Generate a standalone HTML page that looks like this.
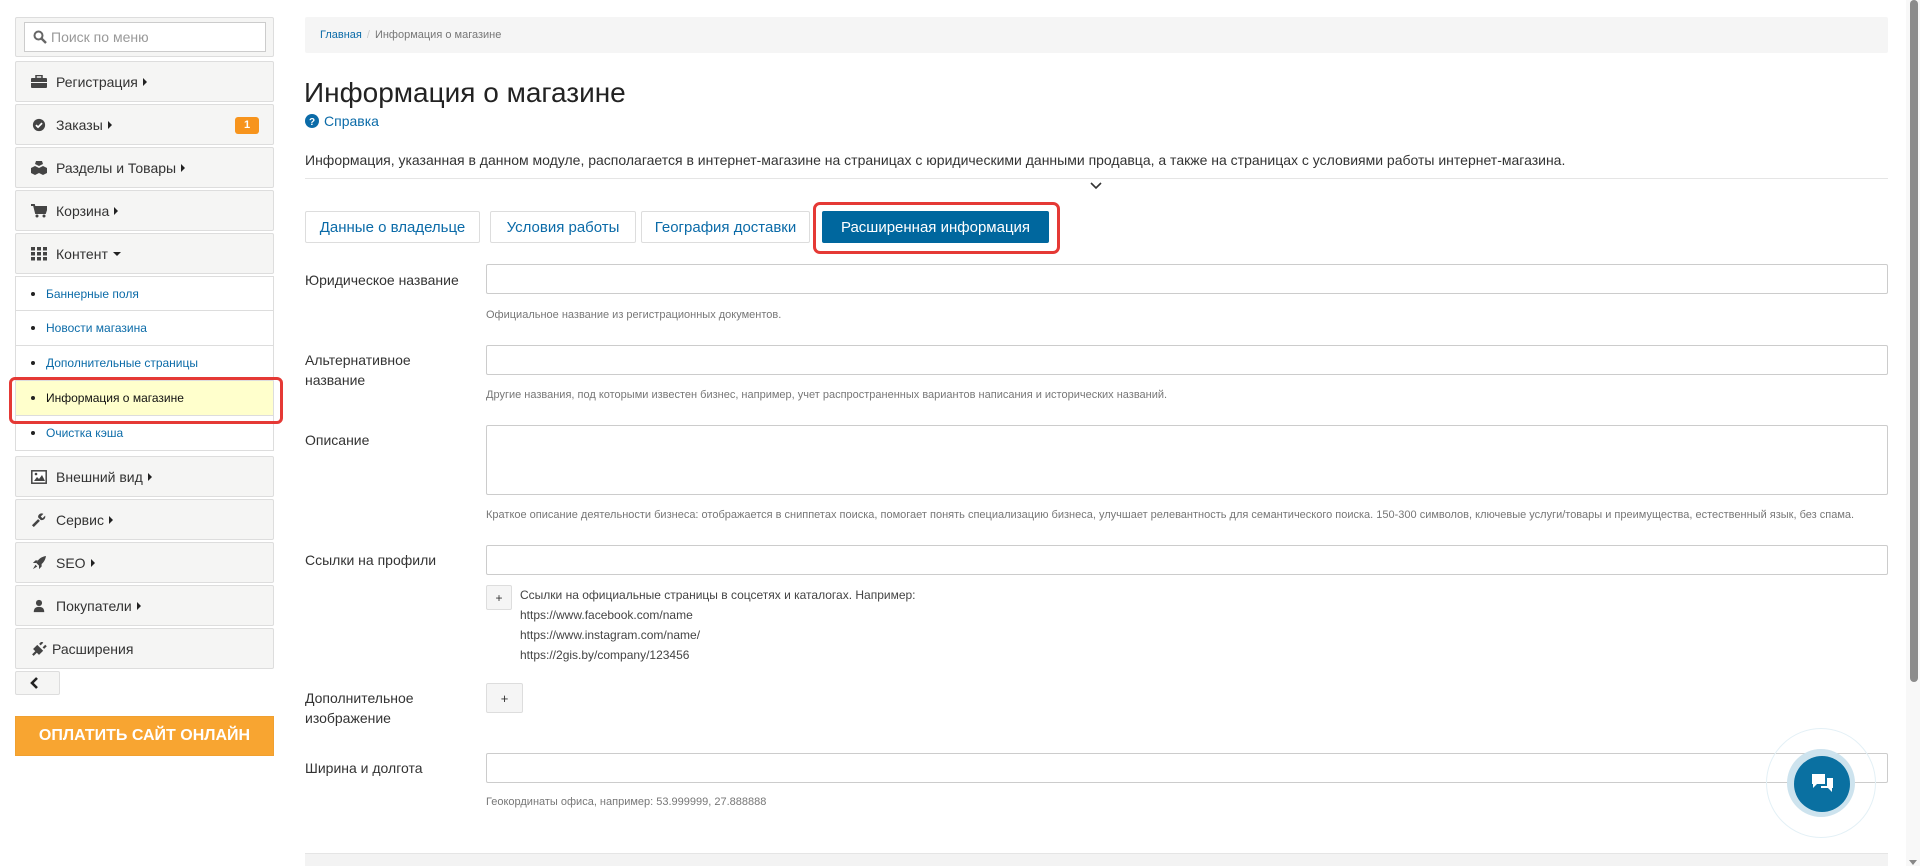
<!DOCTYPE html>
<html><head><meta charset="utf-8"><style>
*{box-sizing:border-box;margin:0;padding:0}
body{width:1920px;height:866px;overflow:hidden;background:#fff;font-family:"Liberation Sans",Arial,sans-serif;color:#333;position:relative}
.a{position:absolute}
.panel{position:absolute;left:15px;width:259px;background:#f5f5f4;border:1px solid #ddd;border-radius:2px}
.mi{height:39px;font-size:14px;color:#333;display:flex;align-items:center;padding-left:15px}
.mi .ic{width:16px;height:14px;margin-right:9px;display:inline-block}
.car{display:inline-block;width:0;height:0;border-top:4px solid transparent;border-bottom:4px solid transparent;border-left:4px solid #222;margin-left:5px}
.sub{position:absolute;left:15px;width:259px;height:35px;background:#fff;border:1px solid #ddd;border-top:none;font-size:12px;color:#0b6ba8;display:flex;align-items:center;padding-left:15px}
.sub:before{content:"";width:4px;height:4px;border-radius:50%;background:#222;margin-right:11px}
.lbl{position:absolute;left:305px;font-size:14px;color:#333;line-height:20px}
.inp{position:absolute;left:486px;width:1402px;height:30px;border:1px solid #ccc;border-radius:2px;background:#fff}
.help{position:absolute;left:486px;font-size:11px;color:#777}
.tab{position:absolute;top:211px;height:32px;border:1px solid #ddd;border-radius:2px;font-size:15px;color:#0b6ba8;display:flex;align-items:center;justify-content:center}
.btn{position:absolute;background:#f5f5f5;border:1px solid #ddd;border-radius:2px;font-size:13px;display:flex;align-items:center;justify-content:center;color:#333}
</style></head><body>

<div class="panel" style="top:17px;height:40px"></div>
<div class="a" style="left:24px;top:22px;width:242px;height:30px;border:1px solid #ccc;background:#fff;font-size:14px;color:#999;display:flex;align-items:center;padding-left:8px">
<svg width="14" height="14" viewBox="0 0 14 14" style="margin-right:4px"><circle cx="5.5" cy="5.5" r="4" fill="none" stroke="#666" stroke-width="2"/><path d="M8.5 8.5L13 13" stroke="#666" stroke-width="2.4"/></svg>Поиск по меню</div>

<div class="panel" style="top:61px"><div class="mi"><svg class="ic" viewBox="0 0 16 14"><rect x="0" y="3" width="16" height="10" rx="1" fill="#444"/><rect x="5" y="0.5" width="6" height="3" fill="none" stroke="#444" stroke-width="1.5"/><rect x="0" y="7" width="16" height="1" fill="#f5f5f4"/></svg>Регистрация<span class="car"></span></div></div>
<div class="panel" style="top:104px"><div class="mi"><svg class="ic" viewBox="0 0 16 16"><circle cx="8" cy="8" r="7" fill="#444"/><path d="M4.5 8.2l2.4 2.3 4.6-4.6" stroke="#fff" stroke-width="2" fill="none"/></svg>Заказы<span class="car"></span></div>
<div class="a" style="left:219px;top:12px;width:24px;height:17px;background:#f7941d;border-radius:3px;color:#fff;font-size:11px;font-weight:bold;text-align:center;line-height:17px">1</div></div>
<div class="panel" style="top:147px"><div class="mi"><svg class="ic" viewBox="0 0 16 14"><path d="M5 0h6l1 3-4 2-4-2z M0 7l4-2 4 2v5l-4 2-4-2z M8 7l4-2 4 2v5l-4 2-4-2z" fill="#444"/></svg>Разделы и Товары<span class="car"></span></div></div>
<div class="panel" style="top:190px"><div class="mi"><svg class="ic" viewBox="0 0 16 14"><path d="M0 1h3l2 8h9l2-6H4" fill="none" stroke="#444" stroke-width="2"/><rect x="4" y="3" width="11" height="5" fill="#444"/><circle cx="6" cy="12" r="1.5" fill="#444"/><circle cx="13" cy="12" r="1.5" fill="#444"/></svg>Корзина<span class="car"></span></div></div>
<div class="panel" style="top:233px"><div class="mi"><svg class="ic" viewBox="0 0 16 14"><g fill="#444"><rect x="0" y="0" width="4" height="3.5"/><rect x="6" y="0" width="4" height="3.5"/><rect x="12" y="0" width="4" height="3.5"/><rect x="0" y="5" width="4" height="3.5"/><rect x="6" y="5" width="4" height="3.5"/><rect x="12" y="5" width="4" height="3.5"/><rect x="0" y="10" width="4" height="3.5"/><rect x="6" y="10" width="4" height="3.5"/><rect x="12" y="10" width="4" height="3.5"/></g></svg>Контент<span style="display:inline-block;border-left:4px solid transparent;border-right:4px solid transparent;border-top:4px solid #222;margin-left:5px"></span></div></div>

<div class="sub" style="top:276px;border-top:1px solid #ddd">Баннерные поля</div>
<div class="sub" style="top:311px">Новости магазина</div>
<div class="sub" style="top:346px">Дополнительные страницы</div>
<div class="sub" style="top:381px;background:#ffffcc;color:#111">Информация о магазине</div>
<div class="sub" style="top:416px">Очистка кэша</div>
<div class="a" style="left:9px;top:377px;width:274px;height:47px;border:3px solid #e53935;border-radius:6px"></div>

<div class="panel" style="top:456px"><div class="mi"><svg class="ic" viewBox="0 0 16 14"><rect x="0.8" y="0.8" width="14.4" height="12.4" fill="#fff" stroke="#444" stroke-width="1.5"/><path d="M3 11l3-4 2 2 3-4 3 6z" fill="#444"/><circle cx="5" cy="4" r="1.3" fill="#444"/></svg>Внешний вид<span class="car"></span></div></div>
<div class="panel" style="top:499px"><div class="mi"><svg class="ic" viewBox="0 0 16 16"><path d="M1 15l7-7" stroke="#444" stroke-width="3"/><path d="M7 5a4 4 0 0 1 6-4l-3 3 2 2 3-3a4 4 0 0 1-5 5z" fill="#444"/></svg>Сервис<span class="car"></span></div></div>
<div class="panel" style="top:542px"><div class="mi"><svg class="ic" viewBox="0 0 16 16"><path d="M16 0C10 1 7 4 5 8l3 3c4-2 7-5 8-11z M5 8l-4 0 3-3h3z M8 11v4l3-3v-3z M4 10l-3 5 5-3z" fill="#444"/></svg>SEO<span class="car"></span></div></div>
<div class="panel" style="top:585px"><div class="mi"><svg class="ic" viewBox="0 0 16 16"><circle cx="8" cy="4.5" r="3.5" fill="#444"/><path d="M2 15c0-5 3-6 6-6s6 1 6 6z" fill="#444"/></svg>Покупатели<span class="car"></span></div></div>
<div class="panel" style="top:628px"><div class="mi"><svg class="ic" viewBox="0 0 16 16" style="margin-right:5px"><path d="M1 15l4-4 M6 5l5 5-3 3-5-5z M9 3l3-3 M13 7l3-3" stroke="#444" stroke-width="2.5" fill="#444"/></svg>Расширения</div></div>
<div class="a" style="left:15px;top:671px;width:45px;height:24px;background:#f5f5f4;border:1px solid #ddd;border-radius:2px"><svg width="43" height="22" viewBox="0 0 43 22"><path d="M21 6l-5 5 5 5" stroke="#222" stroke-width="2.6" fill="none"/></svg></div>
<div class="a" style="left:15px;top:716px;width:259px;height:40px;background:#f8a531;border:1px solid #f0a030;color:#fff;font-weight:bold;font-size:16px;text-align:center;line-height:38px">ОПЛАТИТЬ САЙТ ОНЛАЙН</div>

<div class="a" style="left:305px;top:17px;width:1583px;height:36px;background:#f5f5f5;border-radius:2px;font-size:11px;line-height:36px;padding-left:15px"><span style="color:#0b6ba8">Главная</span><span style="color:#ccc;padding:0 5px">/</span><span style="color:#777">Информация о магазине</span></div>
<div class="a" style="left:304px;top:76px;font-size:28px;color:#222;line-height:34px">Информация о магазине</div>
<div class="a" style="left:305px;top:113px;font-size:14px;color:#0b6ba8;display:flex;align-items:center"><svg width="14" height="14" viewBox="0 0 14 14" style="margin-right:5px"><circle cx="7" cy="7" r="7" fill="#0b6ba8"/><text x="7" y="11" font-size="10" font-weight="bold" fill="#fff" text-anchor="middle" font-family="Liberation Sans">?</text></svg>Справка</div>
<div class="a" style="left:305px;top:152px;font-size:14px;color:#333">Информация, указанная в данном модуле, располагается в интернет-магазине на страницах с юридическими данными продавца, а также на страницах с условиями работы интернет-магазина.</div>
<div class="a" style="left:305px;top:178px;width:1583px;height:1px;background:#e5e5e5"></div>
<svg class="a" style="left:1089px;top:181px" width="14" height="10" viewBox="0 0 14 10"><path d="M2 2l5 5 5-5" stroke="#333" stroke-width="1.6" fill="none"/></svg>

<div class="tab" style="left:305px;width:175px">Данные о владельце</div>
<div class="tab" style="left:490px;width:146px">Условия работы</div>
<div class="tab" style="left:641px;width:169px">География доставки</div>
<div class="tab" style="left:822px;width:227px;background:#00679e;border-color:#00679e;color:#fff">Расширенная информация</div>
<div class="a" style="left:813px;top:202px;width:247px;height:52px;border:3px solid #e53935;border-radius:7px"></div>

<div class="lbl" style="top:270px">Юридическое название</div>
<div class="inp" style="top:264px"></div>
<div class="help" style="top:309px">Официальное название из регистрационных документов.</div>

<div class="lbl" style="top:350px;line-height:20px">Альтернативное<br>название</div>
<div class="inp" style="top:345px"></div>
<div class="help" style="top:389px">Другие названия, под которыми известен бизнес, например, учет распространенных вариантов написания и исторических названий.</div>

<div class="lbl" style="top:430px">Описание</div>
<div class="inp" style="top:425px;height:70px"></div>
<div class="help" style="top:509px">Краткое описание деятельности бизнеса: отображается в сниппетах поиска, помогает понять специализацию бизнеса, улучшает релевантность для семантического поиска. 150-300 символов, ключевые услуги/товары и преимущества, естественный язык, без спама.</div>

<div class="lbl" style="top:550px">Ссылки на профили</div>
<div class="inp" style="top:545px"></div>
<div class="btn" style="left:486px;top:585px;width:26px;height:25px;font-size:12px">+</div>
<div class="a" style="left:520px;top:585px;font-size:12px;color:#444;line-height:20px">Ссылки на официальные страницы в соцсетях и каталогах. Например:<br>https://www.facebook.com/name<br>https://www.instagram.com/name/<br>https://2gis.by/company/123456</div>

<div class="lbl" style="top:688px">Дополнительное<br>изображение</div>
<div class="btn" style="left:486px;top:683px;width:37px;height:30px">+</div>

<div class="lbl" style="top:758px">Ширина и долгота</div>
<div class="inp" style="top:753px"></div>
<div class="help" style="top:796px">Геокординаты офиса, например: 53.999999, 27.888888</div>

<div class="a" style="left:305px;top:853px;width:1583px;height:13px;background:#f3f3f3;border-top:1px solid #e5e5e5"></div>

<div class="a" style="left:1766px;top:728px;width:110px;height:110px;border-radius:50%;border:1px solid #e3f0f6"></div>
<div class="a" style="left:1787px;top:749px;width:68px;height:68px;border-radius:50%;background:#cde3ee"></div>
<div class="a" style="left:1794px;top:756px;width:56px;height:56px;border-radius:50%;background:#0a70a1"></div>
<svg class="a" style="left:1811px;top:773px" width="23" height="21" viewBox="0 0 23 21"><path d="M1 1h13v10H6l-4 4v-4H1z" fill="#fff"/><path d="M16 5h6v10h-1v4l-4-4h-7v-2h6z" fill="#fff"/></svg>

<div class="a" style="left:1906px;top:0;width:14px;height:866px;background:#f8f8f8"></div>
<div class="a" style="left:1910px;top:0;width:8px;height:682px;background:#8c8c8c;border-radius:4px"></div>
<div class="a" style="left:1909px;top:860px;border-left:4px solid transparent;border-right:4px solid transparent;border-top:5px solid #888"></div>
</body></html>
